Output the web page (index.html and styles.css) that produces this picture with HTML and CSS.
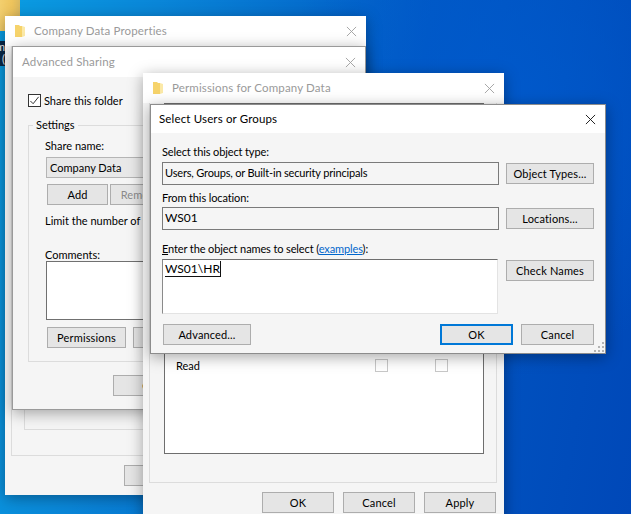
FILE: index.html
```html
<!doctype html>
<html lang="en">
  <head>
    <meta charset="UTF-8" />
    <meta name="viewport" content="width=device-width, initial-scale=1.0" />
    <title>Select Users or Groups</title>
    <link rel="stylesheet" href="styles.css">
  </head>
  <body>
    <div class="desktop">
      <div class="desktop-folder"></div>
      <div class="desktop-label">m<br>)</div>

      <!-- Company Data Properties -->
      <div class="window win-props inactive">
        <div class="titlebar">
          <svg class="folder" viewBox="0 0 12 14"><path d="M1 1h4l1 1h2v11H1z" fill="#f6d36b"/><path d="M8 2l3 1v9l-3 1z" fill="#fbe9a8"/></svg>
          <span class="title">Company Data Properties</span>
          <svg class="close" viewBox="0 0 12 12"><path d="M1 1l10 10M11 1L1 11"/></svg>
        </div>
        <div class="body props-body">
          <div class="outer-group">
            <div class="inner-group">To change this setting</div>
          </div>
          <div class="props-buttons"><button class="btn props-ok"></button></div>
        </div>
      </div>

      <!-- Advanced Sharing -->
      <div class="window win-share inactive">
        <div class="titlebar">
          <span class="title">Advanced Sharing</span>
          <svg class="close" viewBox="0 0 12 12"><path d="M1 1l10 10M11 1L1 11"/></svg>
        </div>
        <div class="body share-body">
          <label class="share-check">
            <span class="checkbox"><svg viewBox="0 0 12 12"><path d="M1.5 6.5l3 3 6-7.5"/></svg></span>
            Share this folder
          </label>
          <fieldset class="settings">
            <legend>Settings</legend>
            <div class="field-label">Share name:</div>
            <div class="share-name">Company Data</div>
            <div class="share-row">
              <button class="btn add-btn">Add</button>
              <button class="btn remove-btn" disabled>Remove</button>
            </div>
            <div class="limit">Limit the number of simultaneous users to:</div>
            <div class="field-label comments-label">Comments:</div>
            <div class="comments"></div>
            <div class="share-row perm-row">
              <button class="btn perm-btn">Permissions</button>
              <button class="btn caching-btn"></button>
            </div>
          </fieldset>
          <div class="share-ok"><button class="btn props-ok">OK</button></div>
        </div>
      </div>

      <!-- Permissions for Company Data -->
      <div class="window win-perm inactive">
        <div class="titlebar">
          <svg class="folder" viewBox="0 0 12 14"><path d="M1 1h4l1 1h2v11H1z" fill="#f6d36b"/><path d="M8 2l3 1v9l-3 1z" fill="#fbe9a8"/></svg>
          <span class="title">Permissions for Company Data</span>
          <svg class="close" viewBox="0 0 12 12"><path d="M1 1l10 10M11 1L1 11"/></svg>
        </div>
        <div class="body perm-body">
          <div class="perm-group">
            <div class="perm-list">
              <div class="perm-item">
                <span class="perm-name">Change</span>
                <span class="tick"></span>
                <span class="tick"></span>
              </div>
              <div class="perm-item">
                <span class="perm-name">Read</span>
                <span class="tick"></span>
                <span class="tick"></span>
              </div>
            </div>
          </div>
          <div class="perm-buttons">
            <button class="btn">OK</button>
            <button class="btn">Cancel</button>
            <button class="btn">Apply</button>
          </div>
        </div>
      </div>

      <!-- Select Users or Groups -->
      <div class="window win-select">
        <div class="titlebar">
          <span class="title">Select Users or Groups</span>
          <svg class="close" viewBox="0 0 12 12"><path d="M1 1l10 10M11 1L1 11"/></svg>
        </div>
        <div class="body select-body">
          <div class="select-row row-type">
            <div class="select-col">
              <div class="label">Select this object type:</div>
              <div class="readonly">Users, Groups, or Built-in security principals</div>
            </div>
            <button class="btn side-btn">Object Types...</button>
          </div>
          <div class="select-row row-location">
            <div class="select-col">
              <div class="label">From this location:</div>
              <div class="readonly">WS01</div>
            </div>
            <button class="btn side-btn">Locations...</button>
          </div>
          <div class="select-row row-names">
            <div class="select-col">
              <div class="label"><u>E</u>nter the object names to select (<a href="#">examples</a>):</div>
              <div class="names"><span class="names-value">WS01\HR</span></div>
            </div>
            <button class="btn side-btn">Check Names</button>
          </div>
          <div class="select-footer">
            <button class="btn adv-btn">Advanced...</button>
            <div class="footer-right">
              <button class="btn default-btn">OK</button>
              <button class="btn">Cancel</button>
            </div>
          </div>
          <svg class="grip" viewBox="0 0 11 11" fill="#b4b4b4">
            <rect x="8" y="0" width="2" height="2"/>
            <rect x="4" y="4" width="2" height="2"/><rect x="8" y="4" width="2" height="2"/>
            <rect x="0" y="8" width="2" height="2"/><rect x="4" y="8" width="2" height="2"/><rect x="8" y="8" width="2" height="2"/>
          </svg>
        </div>
      </div>
    </div>
  </body>
</html>
```

FILE: styles.css
```css
html,
body {
  margin: 0;
  padding: 0;
  height: 100%;
}

body {
  font-family: Lato, Roboto, sans-serif;
  font-size: 11px;
  color: #000;
  overflow: hidden;
}

.desktop {
  position: relative;
  width: 631px;
  height: 514px;
  overflow: hidden;
  background:
    radial-gradient(ellipse 220px 260px at 500px 120px, rgba(0, 90, 205, 0.9), rgba(0, 80, 190, 0) 100%),
    linear-gradient(100deg, #0a9de2 0%, #0a86d8 22%, #0058c4 60%, #0048b8 100%);
}

.desktop-folder {
  position: absolute;
  left: 0;
  top: 0;
  width: 20px;
  height: 31px;
  background: linear-gradient(90deg, #f3cf6e, #eec45c 60%, #d9b860);
}

.desktop-label {
  position: absolute;
  left: 0;
  top: 41px;
  width: 5px;
  height: 25px;
  overflow: hidden;
  background: #0b2a4a;
  color: #fff;
  font-size: 11px;
  line-height: 12px;
  direction: rtl;
}

/* windows */
.window {
  position: absolute;
  display: flex;
  flex-direction: column;
  box-sizing: border-box;
  background: #f5f5f5;
  box-shadow: 0 3px 14px rgba(0, 0, 0, 0.35);
}

.win-props {
  left: 5px;
  top: 16px;
  width: 361px;
  height: 479px;
}

.win-share {
  left: 12px;
  top: 46px;
  width: 354px;
  height: 364px;
  border: 1px solid #9a9a9a;
}

.win-perm {
  left: 143px;
  top: 73px;
  width: 361px;
  height: 460px;
}

.win-select {
  left: 150px;
  top: 104px;
  width: 456px;
  height: 250px;
  border: 1px solid #8c8c8c;
}

.titlebar {
  display: flex;
  align-items: center;
  flex: none;
  height: 30px;
  padding: 0 9px;
  background: #fff;
  font-size: 11.5px;
  letter-spacing: 0.15px;
}

.win-select .titlebar {
  height: 28px;
  padding: 0 9px 0 8px;
}

.inactive .title {
  color: #9a9a9a;
}

.title {
  flex: 1;
  padding-bottom: 2px;
}

.win-select .title {
  padding-bottom: 1px;
}

.folder {
  width: 12px;
  height: 14px;
  margin-right: 8px;
}

.close {
  width: 11px;
  height: 11px;
  fill: none;
  stroke: #111;
  stroke-width: 1;
}

.inactive .close {
  stroke: #a0a0a0;
}

.body {
  position: relative;
  flex: 1;
  background: #f5f5f5;
}

.btn {
  box-sizing: border-box;
  height: 21px;
  padding: 0;
  border: 1px solid #adadad;
  background: #e5e5e5;
  font: inherit;
  color: #000;
  letter-spacing: 0.15px;
  white-space: nowrap;
}

/* properties window */
.props-body {
  padding: 0 6px;
}

.outer-group {
  height: 410px;
  box-sizing: border-box;
  padding: 0 12px;
  border: 1px solid #dcdcdc;
  border-top: 0;
}

.inner-group {
  box-sizing: border-box;
  height: 384px;
  padding: 349px 0 0 11px;
  border: 1px solid #dcdcdc;
  border-top: 0;
  white-space: nowrap;
  line-height: 16px;
}

.props-buttons {
  padding: 9px 0 0 113px;
}

.props-ok {
  width: 75px;
}

/* advanced sharing window */
.share-body {
  padding: 15px 15px 0;
}

.share-check {
  display: flex;
  align-items: center;
  gap: 3px;
  height: 16px;
}

.checkbox {
  box-sizing: border-box;
  width: 13px;
  height: 13px;
  background: #fff;
  border: 1px solid #333;
}

.checkbox svg {
  display: block;
  width: 11px;
  height: 11px;
  fill: none;
  stroke: #222;
}

.settings {
  box-sizing: border-box;
  height: 245px;
  margin: 9px 0 0;
  padding: 0 16px;
  border: 1px solid #dcdcdc;
  min-width: 0;
}

.settings legend {
  padding: 0 3px;
  margin-left: -12px;
  line-height: 16px;
}

.field-label {
  margin-top: 5px;
  line-height: 16px;
}

.share-name {
  box-sizing: border-box;
  width: 150px;
  height: 21px;
  margin: 3px 0 0 1px;
  padding: 2px 3px;
  background: #e8e8e8;
  border: 1px solid #b5b5b5;
  line-height: 16px;
}

.share-row {
  display: flex;
  gap: 2px;
  margin: 6px 0 0 2px;
}

.add-btn {
  width: 61px;
}

.remove-btn {
  width: 61px;
  color: #8a8a8a;
}

.limit {
  width: 98px;
  overflow: hidden;
  margin-top: 8px;
  line-height: 16px;
  white-space: nowrap;
}

.comments-label {
  margin-top: 19px;
  line-height: 13px;
}

.comments {
  box-sizing: border-box;
  width: 150px;
  height: 59px;
  margin-left: 1px;
  background: #fff;
  border: 1px solid #707070;
}

.perm-row {
  gap: 7px;
  margin-top: 7px;
}

.perm-btn {
  width: 79px;
}

.caching-btn {
  width: 70px;
}

.share-ok {
  padding: 13px 0 0 85px;
}

/* permissions window */
.perm-body {
  padding: 0 7px 0 6px;
}

.perm-group {
  box-sizing: border-box;
  height: 380px;
  padding: 0 12px 0 14px;
  border: 1px solid #dcdcdc;
  border-top: 0;
}

.perm-list {
  box-sizing: border-box;
  height: 351px;
  padding-top: 236px;
  background: #fff;
  border: 1px solid #6e6e6e;
}

.perm-item {
  display: flex;
  align-items: center;
  height: 14px;
  margin-bottom: 4px;
  padding-left: 11px;
}

.perm-name {
  flex: none;
  width: 199px;
}

.tick {
  flex: none;
  box-sizing: border-box;
  width: 13px;
  height: 13px;
  margin-left: 47px;
  background: #fff;
  border: 1px solid #c8c8c8;
}

.perm-name + .tick {
  margin-left: 0;
}

.perm-buttons {
  display: flex;
  gap: 9px;
  padding: 9px 0 0 113px;
}

.perm-buttons .btn {
  width: 72px;
}

/* select users window */
.select-body {
  padding: 1px 11px 0;
}

.select-row {
  display: flex;
  justify-content: space-between;
}

.select-col {
  width: 337px;
}

.label {
  line-height: 16px;
  letter-spacing: -0.12px;
  white-space: nowrap;
}

.row-type .label {
  padding: 10px 0 2px;
}

.row-location .label {
  padding: 5px 0 1px;
}

.row-names .label {
  padding: 11px 0 2px;
}

.label a {
  color: #0066cc;
}

.readonly {
  box-sizing: border-box;
  height: 23px;
  padding: 1px 2px;
  background: #f5f5f5;
  border: 1px solid #7a7a7a;
  letter-spacing: -0.17px;
  line-height: 18px;
}

.row-location .readonly {
  font-size: 12px;
  letter-spacing: 0;
}

.names {
  box-sizing: border-box;
  width: 336px;
  height: 55px;
  padding: 1px 2px;
  background: #fff;
  border: 1px solid #e3e3e3;
  border-top: 1px solid #6e6e6e;
  border-left: 1px solid #8a8a8a;
  font-size: 12px;
  line-height: 15px;
}

.names-value {
  display: inline-block;
  border: 1px solid #111;
  border-top: 0;
  border-left: 0;
}

.side-btn {
  width: 88px;
}

.row-type .side-btn {
  margin-top: 29px;
}

.row-location .side-btn {
  margin-top: 23px;
}

.row-names .side-btn {
  margin-top: 30px;
}

.select-footer {
  display: flex;
  justify-content: space-between;
  margin: 10px 0 0 1px;
}

.adv-btn {
  width: 88px;
}

.footer-right {
  display: flex;
  gap: 8px;
}

.footer-right .btn {
  width: 73px;
}

.footer-right .default-btn {
  border: 2px solid #0078d7;
}

.grip {
  position: absolute;
  right: 0;
  bottom: 0;
  width: 11px;
  height: 11px;
}
```
